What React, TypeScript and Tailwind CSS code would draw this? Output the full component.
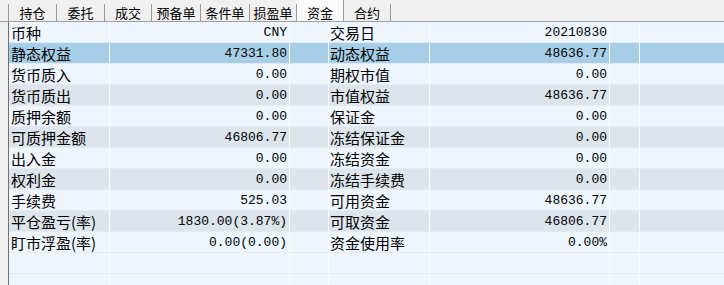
import React from "react";

const tabs = [
  { name: "持仓", w: 49 },
  { name: "委托", w: 48 },
  { name: "成交", w: 47 },
  { name: "预备单", w: 49 },
  { name: "条件单", w: 49 },
  { name: "损盈单", w: 47 },
  { name: "资金", w: 47, active: true },
  { name: "合约", w: 47 },
];

type Row = [string, string, string, string];

const rows: Row[] = [
  ["币种", "CNY", "交易日", "20210830"],
  ["静态权益", "47331.80", "动态权益", "48636.77"],
  ["货币质入", "0.00", "期权市值", "0.00"],
  ["货币质出", "0.00", "市值权益", "48636.77"],
  ["质押余额", "0.00", "保证金", "0.00"],
  ["可质押金额", "46806.77", "冻结保证金", "0.00"],
  ["出入金", "0.00", "冻结资金", "0.00"],
  ["权利金", "0.00", "冻结手续费", "0.00"],
  ["手续费", "525.03", "可用资金", "48636.77"],
  ["平仓盈亏(率)", "1830.00(3.87%)", "可取资金", "46806.77"],
  ["盯市浮盈(率)", "0.00(0.00)", "资金使用率", "0.00%"],
  ["", "", "", ""],
  ["", "", "", ""],
];

const cjk = "font-['Noto_Sans_CJK_SC','Noto_Sans',sans-serif]";
const mono = "font-['Liberation_Mono','DejaVu_Sans_Mono',monospace]";

export default function App() {
  return (
    <div className="w-[724px] h-[285px] bg-[#f0f0f0] overflow-hidden flex flex-col text-black">
      {/* tab bar */}
      <div className="h-[22px] flex items-end pl-[8px] border-b border-[#a0a0a0] shrink-0">
        {tabs.map((t, i) => (
          <div
            key={t.name}
            style={{ width: t.w }}
            className={
              (t.active
                ? "h-[21px] bg-[#fbfbfb] "
                : "h-[17px] ") +
              (i === 0 ? "border-l border-[#7a7a7a] " : "") +
              "border-r border-[#9a9a9a] flex items-center justify-center text-[13px] leading-none " +
              cjk
            }
          >
            <span className={t.active ? "mt-[3px]" : "mt-[0px]"}>{t.name}</span>
          </div>
        ))}
      </div>
      {/* body */}
      <div className="flex-1 flex min-h-0">
        <div className="w-[8px] shrink-0" />
        <div className="flex-1 border-l border-[#6f6f6f] bg-[#eef5fd] overflow-hidden">
          {rows.map((r, i) => {
            const empty = r[0] === "";
            const bg = i === 1 ? "bg-[#a6cfe7]" : !empty && i % 2 === 1 ? "bg-[#dde4eb]" : "bg-[#eef5fd]";
            return (
              <div
                key={i}
                className={
                  "grid grid-cols-[101px_180px_39px_101px_180px_30px_1fr] h-[21px] border-b border-[#e4eaf1] " +
                  bg
                }
              >
                <div className={"border-r border-[#f8fbff] pl-[2px] flex items-center text-[15px] leading-none whitespace-nowrap " + cjk}>
                  {r[0]}
                </div>
                <div className={"border-r border-[#f8fbff] pr-[2px] flex items-center justify-end text-[13px] leading-none whitespace-nowrap " + mono}>
                  {r[1]}
                </div>
                <div className="border-r border-[#f8fbff]" />
                <div className={"border-r border-[#f8fbff] pl-[1px] flex items-center text-[15px] leading-none whitespace-nowrap " + cjk}>
                  {r[2]}
                </div>
                <div className={"border-r border-[#f8fbff] pr-[2px] flex items-center justify-end text-[13px] leading-none whitespace-nowrap " + mono}>
                  {r[3]}
                </div>
                <div className="border-r border-[#f8fbff]" />
                <div />
              </div>
            );
          })}
        </div>
      </div>
    </div>
  );
}
